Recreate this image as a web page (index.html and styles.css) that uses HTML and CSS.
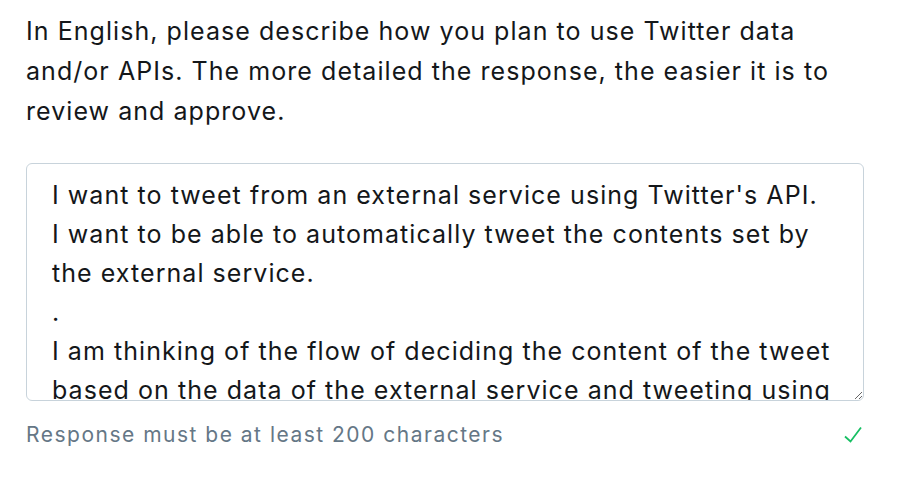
FILE: index.html
```html
<!DOCTYPE html>
<html lang="en">

<head>
    <meta charset="UTF-8">
    <meta name="viewport" content="width=device-width, initial-scale=1.0">
    <title>Use case</title>
    <link rel="stylesheet" href="styles.css">
</head>

<body>
    <div class="question">
        <p class="question-text">In English, please describe how you plan to use Twitter data and/or APIs. The more detailed the response, the easier it is to review and approve.</p>

        <textarea class="answer" id="useCase" name="useCase">I want to tweet from an external service using Twitter's API.
I want to be able to automatically tweet the contents set by
the external service.
.
I am thinking of the flow of deciding the content of the tweet
based on the data of the external service and tweeting using
the API.</textarea>

        <div class="answer-hint">
            <span>Response must be at least 200 characters</span>
            <svg class="check" width="18" height="17" viewBox="0 0 18 17">
                <path d="M1 10.5 L6.5 15.5 L17 1.5" fill="none" stroke="#17bf63" stroke-width="1.8"/>
            </svg>
        </div>
    </div>
</body>

</html>
```

FILE: styles.css
```css
body {
    font-family: Inter, "Liberation Sans", Arial, sans-serif;
    background-color: #ffffff;
    margin: 0;
    padding: 11px 39px 0 26px;
    color: #14171a;
}

.question-text {
    font-size: 25px;
    line-height: 40px;
    letter-spacing: 1.05px;
    margin: 0 0 32px 0;
    max-width: 822px;
}

.answer {
    display: block;
    width: 100%;
    height: 238px;
    box-sizing: border-box;
    padding: 12px 25px;
    border: 1px solid #c8d3db;
    border-radius: 6px;
    font-family: inherit;
    font-size: 25px;
    line-height: 39px;
    letter-spacing: 1.05px;
    color: #14171a;
    white-space: pre;
    overflow: hidden;
    resize: vertical;
    outline: none;
}

.answer-hint {
    display: flex;
    justify-content: space-between;
    align-items: center;
    margin-top: 21px;
    font-size: 21px;
    letter-spacing: 1.5px;
    color: #657786;
}

.check {
    display: block;
    margin-right: 2px;
}
```
